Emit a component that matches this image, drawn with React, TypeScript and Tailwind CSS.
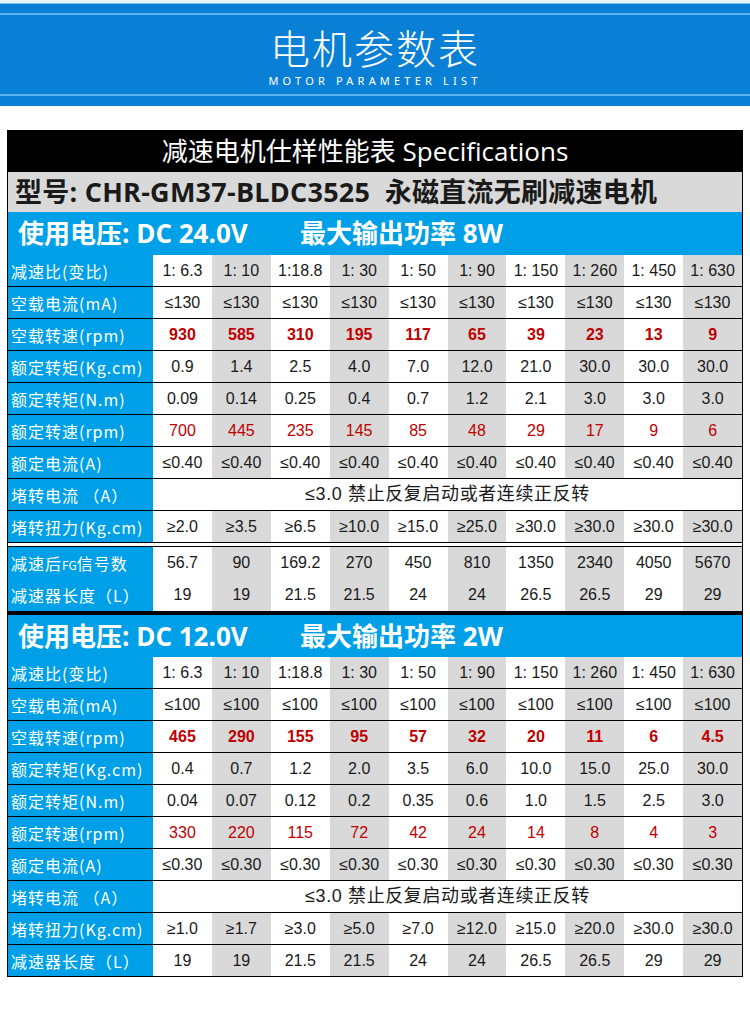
import React from "react";

type Row =
  | { label: React.ReactNode; values: string[]; style?: "boldred" | "red"; border?: boolean }
  | { label: React.ReactNode; merged: string; border?: boolean };

const ratios = ["1: 6.3", "1: 10", "1:18.8", "1: 30", "1: 50", "1: 90", "1: 150", "1: 260", "1: 450", "1: 630"];
const rep = (s: string) => Array.from({ length: 10 }, () => s);
const MERGED = "≤3.0 禁止反复启动或者连续正反转";

const labelCls =
  "w-[145px] shrink-0 bg-[#00a0e9] text-white text-[16px] tracking-[1px] pl-[3px] flex items-center font-['Noto_Sans_CJK_SC',sans-serif] whitespace-nowrap";

function DataRow({ row }: { row: Row }) {
  const border = row.border !== false;
  return (
    <div className={`flex h-[32px] ${border ? "border-b border-black" : ""}`}>
      <div className={labelCls}>{row.label}</div>
      {"merged" in row ? (
        <div className="flex-1 bg-white flex items-center justify-center text-[18px] tracking-[0.6px] text-[#1a1a1a] font-['Liberation_Sans','Noto_Sans_CJK_SC',sans-serif]">
          {row.merged}
        </div>
      ) : (
        row.values.map((v, i) => (
          <div
            key={i}
            className={`flex-1 min-w-0 flex items-center justify-center text-[16px] whitespace-nowrap font-['Liberation_Sans','Noto_Sans_CJK_SC',sans-serif] ${
              i % 2 === 0 ? "bg-white" : "bg-[#d9d9d9]"
            } ${
              row.style === "boldred"
                ? "text-[#c00000] font-bold"
                : row.style === "red"
                ? "text-[#c00000]"
                : "text-[#1a1a1a]"
            }`}
          >
            {v}
          </div>
        ))
      )}
    </div>
  );
}

function VoltageRow({ volt, power, h }: { volt: string; power: string; h: string }) {
  return (
    <div
      className={`${h} bg-[#00a0e9] flex items-center text-white font-bold text-[26px] font-['Open_Sans','Noto_Sans_CJK_SC',sans-serif] whitespace-nowrap`}
    >
      <span className="ml-[10px] w-[282px]">使用电压: DC {volt}</span>
      <span>最大输出功率 {power}</span>
    </div>
  );
}

const section1: Row[] = [
  { label: "减速比(变比)", values: ratios },
  { label: "空载电流(mA)", values: rep("≤130") },
  { label: "空载转速(rpm)", values: ["930", "585", "310", "195", "117", "65", "39", "23", "13", "9"], style: "boldred" },
  { label: "额定转矩(Kg.cm)", values: ["0.9", "1.4", "2.5", "4.0", "7.0", "12.0", "21.0", "30.0", "30.0", "30.0"] },
  { label: "额定转矩(N.m)", values: ["0.09", "0.14", "0.25", "0.4", "0.7", "1.2", "2.1", "3.0", "3.0", "3.0"] },
  { label: "额定转速(rpm)", values: ["700", "445", "235", "145", "85", "48", "29", "17", "9", "6"], style: "red" },
  { label: "额定电流(A)", values: rep("≤0.40") },
  { label: "堵转电流 （A）", merged: MERGED },
  { label: "堵转扭力(Kg.cm)", values: ["≥2.0", "≥3.5", "≥6.5", "≥10.0", "≥15.0", "≥25.0", "≥30.0", "≥30.0", "≥30.0", "≥30.0"] },
];

const section1b: Row[] = [
  {
    label: (
      <span>
        减速后<span className="text-[12px] tracking-normal">FG</span>信号数
      </span>
    ),
    values: ["56.7", "90", "169.2", "270", "450", "810", "1350", "2340", "4050", "5670"],
    border: false,
  },
  { label: "减速器长度（L）", values: ["19", "19", "21.5", "21.5", "24", "24", "26.5", "26.5", "29", "29"], border: false },
];

const section2: Row[] = [
  { label: "减速比(变比)", values: ratios },
  { label: "空载电流(mA)", values: rep("≤100") },
  { label: "空载转速(rpm)", values: ["465", "290", "155", "95", "57", "32", "20", "11", "6", "4.5"], style: "boldred" },
  { label: "额定转矩(Kg.cm)", values: ["0.4", "0.7", "1.2", "2.0", "3.5", "6.0", "10.0", "15.0", "25.0", "30.0"] },
  { label: "额定转矩(N.m)", values: ["0.04", "0.07", "0.12", "0.2", "0.35", "0.6", "1.0", "1.5", "2.5", "3.0"] },
  { label: "额定转速(rpm)", values: ["330", "220", "115", "72", "42", "24", "14", "8", "4", "3"], style: "red" },
  { label: "额定电流(A)", values: rep("≤0.30") },
  { label: "堵转电流 （A）", merged: MERGED },
  { label: "堵转扭力(Kg.cm)", values: ["≥1.0", "≥1.7", "≥3.0", "≥5.0", "≥7.0", "≥12.0", "≥15.0", "≥20.0", "≥30.0", "≥30.0"] },
  { label: "减速器长度（L）", values: ["19", "19", "21.5", "21.5", "24", "24", "26.5", "26.5", "29", "29"] },
];

export default function App() {
  return (
    <div className="w-[750px] min-h-[1026px] bg-white">
      {/* Header band */}
      <div className="h-[3px] bg-[#eaf4fb]" />
      <div className="h-[1px] bg-[#7cc3f2]" />
      <div className="h-[9px] bg-[#0a7fd6]" />
      <div className="h-[2px] bg-[#5bb0ee]" />
      <div className="h-[79px] bg-[#0a7fd6] flex flex-col items-center">
        <div className="mt-[4px] text-[40px] leading-[56px] text-white font-light tracking-[2px] font-['Noto_Sans_CJK_SC',sans-serif]">
          电机参数表
        </div>
        <div className="text-[11px] leading-[12px] text-white tracking-[4.2px] font-['Noto_Sans','Open_Sans',sans-serif]">
          MOTOR PARAMETER LIST
        </div>
      </div>
      <div className="h-[2px] bg-[#5bb0ee]" />
      <div className="h-[10px] bg-[#0a7fd6]" />
      <div className="h-[24px]" />

      {/* Table */}
      <div className="ml-[7px] w-[736px] border-x border-black">
        <div className="h-[42px] bg-black flex items-center justify-center pr-[20px] text-white text-[26px] font-['Open_Sans','Noto_Sans_CJK_SC',sans-serif] whitespace-nowrap">
          减速电机仕样性能表 Specifications
        </div>
        <div className="h-[40px] bg-[#d9d9d9] flex items-center pl-[7px] text-[#1a1a1a] text-[27px] tracking-[0.25px] font-bold font-['Open_Sans','Noto_Sans_CJK_SC',sans-serif] whitespace-nowrap">
          型号: CHR-GM37-BLDC3525&nbsp;&nbsp;永磁直流无刷减速电机
        </div>
        <VoltageRow volt="24.0V" power="8W" h="h-[43px]" />
        {section1.map((r, i) => (
          <DataRow key={i} row={r} />
        ))}
        <div className="h-[4px] bg-white border-b border-black" />
        {section1b.map((r, i) => (
          <DataRow key={i} row={r} />
        ))}
        <div className="h-[4px] bg-black" />
        <VoltageRow volt="12.0V" power="2W" h="h-[42px]" />
        {section2.map((r, i) => (
          <DataRow key={i} row={r} />
        ))}
      </div>
    </div>
  );
}
